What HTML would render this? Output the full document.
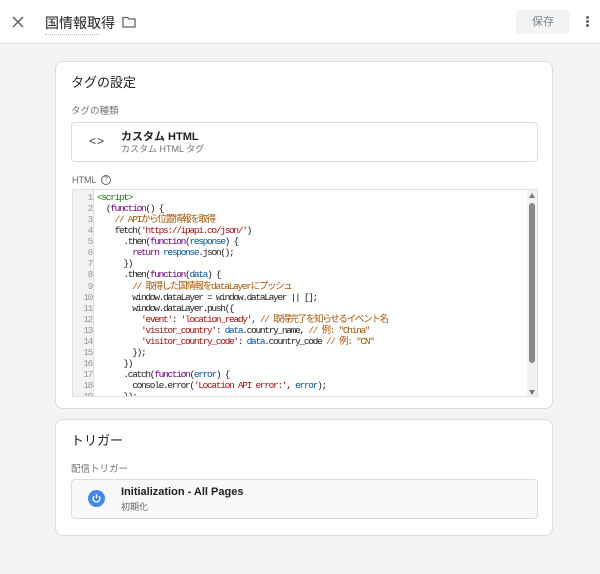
<!DOCTYPE html><html><head><meta charset="utf-8"><style>
*{box-sizing:border-box;margin:0;padding:0}
body{width:600px;height:574px;background:#f1f3f4;font-family:"Liberation Sans","Noto Sans CJK JP",sans-serif;color:#202124;position:relative;overflow:hidden}
.hdr{position:absolute;left:0;top:0;width:600px;height:44px;background:#fff;border-bottom:1px solid #e0e0e0}
.card{position:absolute;left:55px;width:498px;background:#fff;border:1px solid #dadce0;border-radius:8px}
.abs{position:absolute}
.code{position:absolute;left:72px;top:189px;width:466px;height:208px;border:1px solid #e0e0e0;background:#fff;overflow:hidden}
.gut{position:absolute;left:0;top:0;width:21px;height:100%;background:#f3f3f3;border-right:1px solid #ddd}
.ln{font-family:"Liberation Mono","Noto Sans CJK JP",monospace;font-size:9.5px;letter-spacing:-1.3px;line-height:11.07px;white-space:pre}
.nums{position:absolute;left:0;top:2px;width:19px;text-align:right;color:#999}
.src{position:absolute;left:24px;top:2px;color:#222}
.k{color:#708}.v{color:#05a}.s{color:#a11}.c{color:#a50}.t{color:#170}
</style></head><body>
<div class="hdr">
<svg class="abs" style="left:12px;top:16px" width="12" height="12" viewBox="0 0 12 12"><path d="M1 1L11 11M11 1L1 11" stroke="#5f6368" stroke-width="1.5"/></svg>
<div class="abs" style="left:45px;top:13px;font-size:14px;color:#202124">国情報取得</div>
<div class="abs" style="left:45px;top:34px;width:54px;border-bottom:1px dotted #bbb"></div>
<svg class="abs" style="left:122px;top:16px" width="14" height="12" viewBox="0 0 14 12"><path d="M1 1.5h4.5l1.5 1.5h6v8h-12z" fill="none" stroke="#5f6368" stroke-width="1.3"/></svg>
<div class="abs" style="left:516px;top:10px;width:54px;height:24px;background:#f1f3f4;border-radius:3px;color:#80868b;font-size:11px;text-align:center;line-height:24px">保存</div>
<div class="abs" style="left:586px;top:16px;width:3px;height:3px;background:#5f6368;border-radius:50%;box-shadow:0 4px 0 #5f6368,0 8px 0 #5f6368"></div>
</div>
<div class="card" style="top:61px;height:348px"></div>
<div class="abs" style="left:71px;top:72px;font-size:13px">タグの設定</div>
<div class="abs" style="left:71px;top:103px;font-size:9.5px;color:#70757a">タグの種類</div>
<div class="abs" style="left:71px;top:122px;width:467px;height:40px;border:1px solid #dadce0;border-radius:4px"></div>
<div class="abs" style="left:89px;top:134px;font-size:12px;color:#3c4043;letter-spacing:1px">&lt;&gt;</div>
<div class="abs" style="left:121px;top:128px;font-size:11px;font-weight:bold">カスタム HTML</div>
<div class="abs" style="left:121px;top:142px;font-size:9px;color:#70757a">カスタム HTML タグ</div>
<div class="abs" style="left:72px;top:175px;font-size:9px;color:#5f6368">HTML</div>
<div class="abs" style="left:101px;top:175px;width:10px;height:10px;border:1px solid #5f6368;border-radius:50%;font-size:7px;text-align:center;line-height:8px;color:#5f6368">?</div>
<div class="code"><div class="gut"></div>
<div class="ln nums">1
2
3
4
5
6
7
8
9
10
11
12
13
14
15
16
17
18
19</div>
<div class="ln src"><span class="t">&lt;script&gt;</span>
  (<span class="k">function</span>() {
    <span class="c">// APIから位置情報を取得</span>
    fetch(<span class="s">'https://ipapi.co/json/'</span>)
      .then(<span class="k">function</span>(<span class="v">response</span>) {
        <span class="k">return</span> <span class="v">response</span>.json();
      })
      .then(<span class="k">function</span>(<span class="v">data</span>) {
        <span class="c">// 取得した国情報をdataLayerにプッシュ</span>
        window.dataLayer = window.dataLayer || [];
        window.dataLayer.push({
          <span class="s">'event'</span>: <span class="s">'location_ready'</span>, <span class="c">// 取得完了を知らせるイベント名</span>
          <span class="s">'visitor_country'</span>: <span class="v">data</span>.country_name, <span class="c">// 例: "China"</span>
          <span class="s">'visitor_country_code'</span>: <span class="v">data</span>.country_code <span class="c">// 例: "CN"</span>
        });
      })
      .catch(<span class="k">function</span>(<span class="v">error</span>) {
        console.error(<span class="s">'Location API error:'</span>, <span class="v">error</span>);
      });</div>
<div class="abs" style="left:454px;top:0;width:11px;height:100%;background:#f1f1f1"></div>
<div class="abs" style="left:456px;top:3px;width:0;height:0;border-left:3px solid transparent;border-right:3px solid transparent;border-bottom:5px solid #777"></div>
<div class="abs" style="left:456px;top:13px;width:6px;height:160px;background:#8a8a8a;border-radius:3px"></div>
<div class="abs" style="left:456px;top:200px;width:0;height:0;border-left:3px solid transparent;border-right:3px solid transparent;border-top:5px solid #777"></div>
</div>
<div class="card" style="top:419px;height:117px"></div>
<div class="abs" style="left:71px;top:430px;font-size:13px">トリガー</div>
<div class="abs" style="left:71px;top:461px;font-size:9.5px;color:#70757a">配信トリガー</div>
<div class="abs" style="left:71px;top:479px;width:467px;height:40px;border:1px solid #dadce0;border-radius:4px;background:#f8f9fa"></div>
<svg class="abs" style="left:88px;top:490px" width="17" height="17" viewBox="0 0 17 17"><circle cx="8.5" cy="8.5" r="8.5" fill="#4285f4"/><path d="M6 6.2A3.4 3.4 0 1 0 11 6.2" fill="none" stroke="#fff" stroke-width="1.4"/><path d="M8.5 4.3v4" stroke="#fff" stroke-width="1.4"/></svg>
<div class="abs" style="left:121px;top:486px;font-size:11px;font-weight:bold">Initialization - All Pages</div>
<div class="abs" style="left:121px;top:500px;font-size:9px;color:#5f6368">初期化</div>
</body></html>
